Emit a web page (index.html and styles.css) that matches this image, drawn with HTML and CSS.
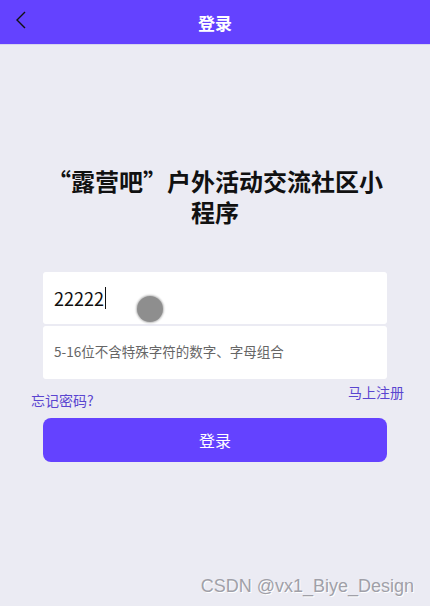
FILE: index.html
```html
<!DOCTYPE html>
<html lang="zh">
<head>
    <meta charset="UTF-8">
    <title>登录</title>
    <link rel="stylesheet" href="styles.css">
</head>
<body>
    <header class="nav">
        <span class="nav-back">
            <svg width="14" height="20" viewBox="0 0 14 20"><path d="M11 2 L3 10 L11 18" fill="none" stroke="#111" stroke-width="1.4"/></svg>
        </span>
        <h1 class="nav-title">登录</h1>
    </header>
    <main class="page">
        <h2 class="title">“露营吧”户外活动交流社区小程序</h2>
        <div class="form">
            <div class="field">
                <span class="field-value">22222</span><span class="caret"></span>
                <span class="touch"></span>
            </div>
            <div class="field field-pwd">
                <span class="placeholder">5-16位不含特殊字符的数字、字母组合</span>
            </div>
        </div>
        <div class="links">
            <a class="link link-forgot">忘记密码?</a>
            <a class="link link-reg">马上注册</a>
        </div>
        <button class="btn-login">登录</button>
    </main>
    <div class="watermark">CSDN @vx1_Biye_Design</div>
</body>
</html>
```

FILE: styles.css
```css
body { margin: 0; font-family: "Noto Sans CJK SC", "Noto Sans", sans-serif; background-color: #ebebf3; color: #111; height: 606px; position: relative; overflow: hidden; }
.nav { height: 44px; background-color: #6442ff; border-bottom: 1px solid #d6d4ee; display: flex; align-items: center; justify-content: center; position: relative; }
.nav-back { position: absolute; left: 14px; top: 10px; }
.nav-title { margin: 0; font-size: 17px; font-weight: bold; color: white; }
.page { padding: 0 43px; }
.title { margin: 120px 0 0; font-size: 24px; line-height: 31px; font-weight: bold; text-align: center; }
.form { margin-top: 45px; }
.field { position: relative; height: 52px; background: white; border-radius: 3px; display: flex; align-items: center; padding: 0 11px; margin-bottom: 2px; }
.field-value { font-size: 18px; color: #111; }
.caret { display: inline-block; width: 1px; height: 22px; background: #111; margin-left: 1px; }
.field-pwd { height: 53px; padding-bottom: 3px; box-sizing: border-box; }
.placeholder { font-size: 13.5px; color: #666; }
.touch { position: absolute; left: 94px; top: 24px; width: 26px; height: 26px; border-radius: 50%; background: #8e8e8e; box-shadow: 0 0 2px 1px #bdbdbd; }
.links { position: relative; height: 37px; }
.link { position: absolute; font-size: 14px; color: #5a45d0; }
.link-forgot { left: -12px; top: 9px; }
.link-reg { right: -17px; top: 1px; }
.btn-login { display: block; width: 100%; height: 44px; border: none; border-radius: 8px; background-color: #6442ff; color: white; font-size: 16px; font-family: inherit; }
.watermark { position: absolute; right: 16px; top: 576px; font-family: "Liberation Sans", sans-serif; font-size: 18px; color: #a0a0a8; text-shadow: 1px 1px 0 #ffffff; }
```
